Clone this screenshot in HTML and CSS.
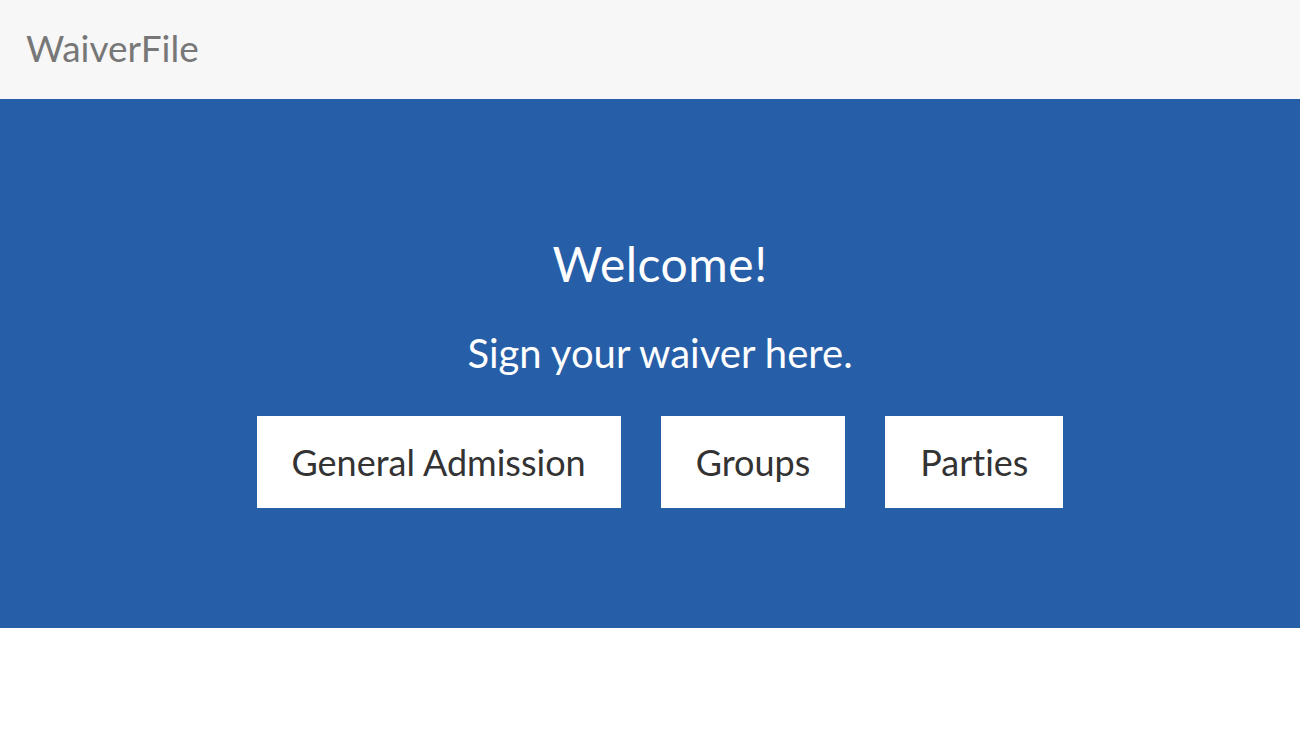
FILE: index.html
```html
<!DOCTYPE html>
<html lang="en">
<head>
    <meta charset="UTF-8">
    <title>WaiverFile</title>
    <link rel="stylesheet" href="styles.css">
</head>
<body>
    <div class="topbar">
        <a class="brand" href="#">WaiverFile</a>
    </div>

    <div class="hero">
        <h1>Welcome!</h1>
        <p class="lead">Sign your waiver here.</p>
        <div class="choices">
            <a class="choice" href="#">General Admission</a>
            <a class="choice" href="#">Groups</a>
            <a class="choice" href="#">Parties</a>
        </div>
    </div>
</body>
</html>
```

FILE: styles.css
```css
body {
    margin: 0;
    background-color: white;
    font-family: Lato, "Open Sans", sans-serif;
    font-variant-ligatures: none;
}
.topbar {
    height: 99px;
    background-color: #f7f7f7;
    display: flex;
    align-items: center;
    padding: 0 26px;
}
.brand {
    color: #777;
    font-size: 37px;
    margin-bottom: 4px;
    text-decoration: none;
}
.hero {
    background-color: #275ea8;
    color: white;
    text-align: center;
    padding: 136px 0 120px 20px;
}
.hero h1 {
    margin: 0;
    font-size: 48px;
    font-weight: normal;
    letter-spacing: 0.5px;
    line-height: 1.2;
}
.lead {
    margin: 36px 0 39px;
    font-size: 40px;
    line-height: 1.2;
}
.choices {
    display: flex;
    justify-content: center;
    gap: 40px;
}
.choice {
    background-color: white;
    color: #333;
    text-decoration: none;
    font-size: 36px;
    line-height: 44px;
    padding: 24px 35px;
}
```
